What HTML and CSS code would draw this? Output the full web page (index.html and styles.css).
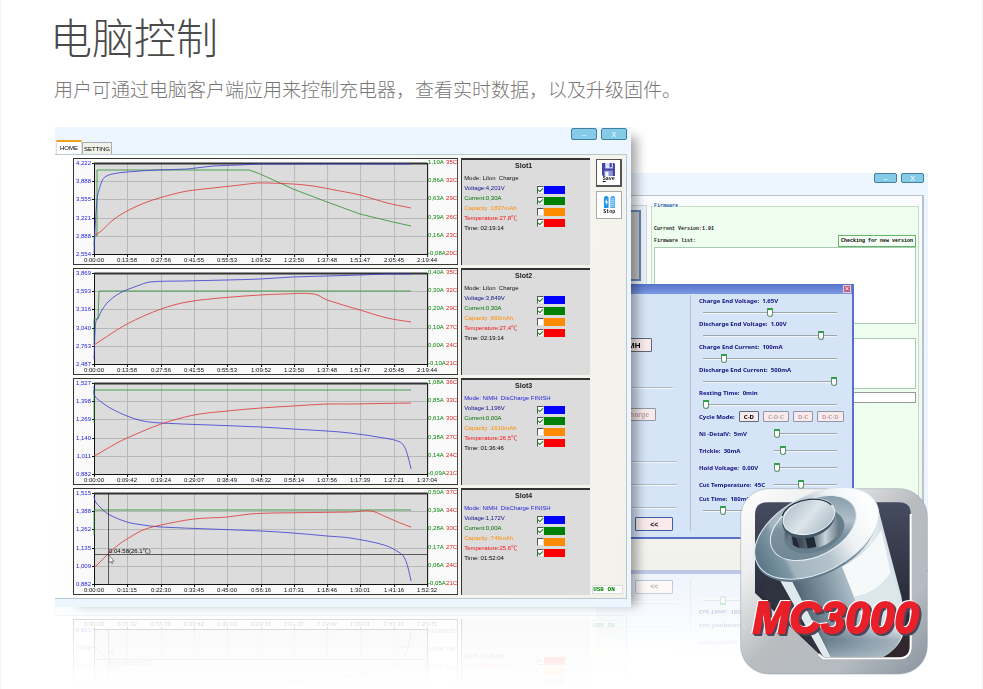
FILE: index.html
```html
<!DOCTYPE html>
<html lang="zh-CN">
<head>
<meta charset="utf-8">
<meta name="viewport" content="width=device-width, initial-scale=1">
<title>MC3000 电脑控制</title>
<link rel="stylesheet" href="styles.css">
</head>
<body>
<main class="page">
  <header class="intro">
    <h1>电脑控制</h1>
    <p>用户可通过电脑客户端应用来控制充电器，查看实时数据，以及升级固件。</p>
  </header>

  <section class="stage">
    <div class="window window--main">
      <div class="titlebar">
        <button class="winbtn" type="button" aria-label="Minimize">–</button>
        <button class="winbtn" type="button" aria-label="Close">X</button>
      </div>
      <nav class="tabs">
        <button class="tab tab--active" type="button">HOME</button>
        <button class="tab" type="button">SETTING</button>
      </nav>
      <div class="board">
        <div class="slots" id="slots"></div>
        <div class="tools">
          <button class="tool tool--focus" type="button">
            <svg viewBox="0 0 12 12" aria-hidden="true">
              <path d="M0 0h11l1 1v11H1L0 11z" fill="#4546a8"/>
              <path d="M3 0h7v5H3z" fill="#d9e4fa"/>
              <path d="M7 0h2v4H7z" fill="#4546a8"/>
              <path d="M2 7h8v5H2z" fill="#8f95d4"/>
              <path d="M3 8h3v4H3z" fill="#f4f6ff"/>
            </svg>
            <span><u>S</u>ave</span>
          </button>
          <button class="tool" type="button">
            <svg viewBox="0 0 13 14" aria-hidden="true">
              <path d="M1.500 0h3v1h1v12h-5V1h1z" fill="#2496e6"/>
              <path d="M3.500 3 1.500 7h1.500v3l2-4H3.500z" fill="#fff"/>
              <path d="M8.500 0h3v1h1v12h-5V1h1z" fill="#48a9ea"/>
              <path d="M8 3h4M8 5h4M8 7h4M8 9h4M8 11h4" stroke="#d9efff" stroke-width=".8"/>
            </svg>
            <span>Stop</span>
          </button>
          <output class="usb">USB ON</output>
        </div>
      </div>
    </div>

    <div class="window window--back">
      <div class="titlebar">
        <button class="winbtn" type="button" aria-label="Minimize">–</button>
        <button class="winbtn" type="button" aria-label="Close">X</button>
      </div>
      <div class="backbody">
        <div class="device"><div class="device__view"></div></div>
        <fieldset class="firmware">
          <legend>Firmware</legend>
          <p class="firmware__version">Current Version:1.01</p>
          <div class="firmware__row">
            <span>Firmware list:</span>
            <button type="button" class="check">Checking for new version</button>
          </div>
          <div class="well well--list"></div>
          <div class="well well--notes"></div>
          <div class="well well--progress"></div>
        </fieldset>
      </div>

      <div class="dialog">
        <div class="dialog__bar"><button type="button" aria-label="Close dialog">×</button></div>
        <div class="dialog__body">
          <div class="dialog__left">
            <button type="button" class="pink pink--type">NiMH</button>
            <hr>
            <button type="button" class="pink pink--mode" disabled>Discharge</button>
            <hr class="wide"><hr class="wide near"><hr class="wide near">
            <button type="button" class="pink pink--back">&lt;&lt;</button>
          </div>
          <form class="params">
            <label>Charge End Voltage:&nbsp; 1.65V<input type="range" value="50"></label>
            <label>Discharge End Voltage:&nbsp; 1.00V<input type="range" value="90"></label>
            <label>Charge End Current:&nbsp; 100mA<input type="range" value="14"></label>
            <label>Discharge End Current:&nbsp; 500mA<input type="range" value="100"></label>
            <label>Resting Time:&nbsp; 0min<input type="range" value="0"></label>
            <div class="cycle">
              <span>Cycle Mode:</span>
              <button type="button" class="pink">C-D</button>
              <button type="button" class="pink" disabled>C-D-C</button>
              <button type="button" class="pink" disabled>D-C</button>
              <button type="button" class="pink" disabled>D-C-D</button>
            </div>
            <label class="inline">Ni -DetalV:&nbsp; 5mV<input type="range" value="0"></label>
            <label class="inline">Trickle:&nbsp; 30mA<input type="range" value="10"></label>
            <label class="inline">Hold Voltage:&nbsp; 0.00V<input type="range" value="0"></label>
            <label class="inline">Cut Temperature:&nbsp; 45C<input type="range" value="42"></label>
            <label>Cut Time:&nbsp; 180min<input type="range" value="13"></label>
          </form>
        </div>
      </div>
    </div>

    <svg class="logo" viewBox="0 0 564 560" role="img" aria-label="MC3000">
      <defs>
        <linearGradient id="frame" x1="0" y1="0" x2="1" y2="1">
          <stop offset="0" stop-color="#ffffff"/><stop offset=".25" stop-color="#eceded"/>
          <stop offset=".5" stop-color="#b9bcbf"/><stop offset=".75" stop-color="#b4bbc1"/><stop offset="1" stop-color="#8a949e"/>
        </linearGradient>
        <linearGradient id="hole" x1="0" y1="0" x2="0" y2="1">
          <stop offset="0" stop-color="#464c60"/><stop offset=".6" stop-color="#2b2d3a"/><stop offset="1" stop-color="#30262a"/>
        </linearGradient>
        <linearGradient id="body" gradientUnits="userSpaceOnUse" x1="130" y1="350" x2="475" y2="245">
          <stop offset="0" stop-color="#394653"/><stop offset=".2" stop-color="#5d717f"/><stop offset=".4" stop-color="#8499a6"/>
          <stop offset=".62" stop-color="#b5c6d0"/><stop offset=".85" stop-color="#e6edf1"/><stop offset="1" stop-color="#d3dde3"/>
        </linearGradient>
        <linearGradient id="foot" x1="0" y1="0" x2="0" y2="1">
          <stop offset="0" stop-color="#a9bac5" stop-opacity="0"/><stop offset=".5" stop-color="#6b7f8d" stop-opacity=".5"/><stop offset="1" stop-color="#a9bac5" stop-opacity=".8"/>
        </linearGradient>
        <linearGradient id="rim" gradientUnits="userSpaceOnUse" x1="-185" y1="0" x2="185" y2="0">
          <stop offset="0" stop-color="#5f7b8b"/><stop offset=".16" stop-color="#8097a5"/><stop offset=".2" stop-color="#a3b5c0"/>
          <stop offset=".5" stop-color="#b4c3cc"/><stop offset=".72" stop-color="#eef2f4"/><stop offset="1" stop-color="#ffffff"/>
        </linearGradient>
        <linearGradient id="ring" x1="0" y1="1" x2="1" y2="0">
          <stop offset="0" stop-color="#6b8292"/><stop offset=".45" stop-color="#7c929f"/><stop offset=".6" stop-color="#b0c0ca"/><stop offset="1" stop-color="#71889a"/>
        </linearGradient>
        <linearGradient id="nub" x1="0" y1="0" x2="1" y2="0">
          <stop offset="0" stop-color="#2f3a45"/><stop offset=".12" stop-color="#6d7c88"/><stop offset=".3" stop-color="#3c4853"/>
          <stop offset=".6" stop-color="#7d8d99"/><stop offset=".75" stop-color="#c9d5dc"/><stop offset="1" stop-color="#63737f"/>
        </linearGradient>
        <linearGradient id="nubtop" x1="0" y1="0" x2="1" y2="1">
          <stop offset="0" stop-color="#a9bac5"/><stop offset=".5" stop-color="#dce5ea"/><stop offset="1" stop-color="#a1b4bf"/>
        </linearGradient>
        <clipPath id="cut"><path d="M0 0H510V476Q505 508 475 508H252L45 312L0 260Z"/></clipPath>
      </defs>
      <rect x="2" y="2" width="560" height="556" rx="84" fill="url(#frame)" stroke="#929ca5" stroke-opacity=".5" stroke-width="3"/>
      <path d="M82 43H478Q512 43 512 77V474Q512 510 476 510H250L45 315V80Q45 43 82 43Z" fill="url(#hole)"/>
      <path d="M512 78V474Q512 511 476 511H250L236 498" fill="none" stroke="#fff" stroke-width="6"/>
      <g clip-path="url(#cut)">
        <path d="M70 235L252 512H420Q482 482 494 425Q492 370 484 325L414 60Z" fill="url(#body)"/>
        <path d="M306 236Q390 190 424 125L452 255Q410 315 342 327Z" fill="#f6f9fa"/>
        <path d="M342 327Q410 315 452 255L476 320L440 380H360Z" fill="#dde6eb"/>
        <path d="M230 400H494Q486 484 420 512H275Z" fill="url(#foot)"/>
        <path d="M112 264L252 512H275L150 268Z" fill="#dfe8ed"/>
        <path d="M80 240L112 264L252 512L60 312Z" fill="#2f333f"/>
      </g>
      <ellipse cx="228" cy="145" rx="197" ry="116" transform="rotate(-27 228 145)" fill="#60798a"/>
      <g transform="translate(230 136) rotate(-27)">
        <ellipse rx="200" ry="116" fill="url(#rim)" stroke="#dfe7eb" stroke-width="3"/>
      </g>
      <ellipse cx="220" cy="120" rx="138" ry="84" transform="rotate(-27 220 120)" fill="url(#ring)" stroke="#e7eef2" stroke-width="3"/>
      <ellipse cx="222" cy="130" rx="94" ry="62" transform="rotate(-20 222 130)" fill="#667d8c"/>
      <path d="M127 90L139 151Q160 186 213 183Q277 173 299 128L283 68Z" fill="url(#nub)"/>
      <path d="M155 144L170 151L178 181L160 172ZM196 150L222 146L229 177L203 181Z" fill="#202a36"/>
      <ellipse cx="206" cy="94" rx="81" ry="54" transform="rotate(-17 206 94)" fill="#44586a"/>
      <ellipse cx="207" cy="86" rx="79" ry="51" transform="rotate(-17 207 86)" fill="url(#nubtop)" stroke="#edf3f6" stroke-width="3"/>
      <path d="M127 84Q139 45 207 34Q250 30 274 50" fill="none" stroke="#1f303d" stroke-width="4"/>
      <text class="logo__text" x="38" y="435">MC3000</text>
    </svg>
  </section>
</main>
<script src="charts.js"></script>
</body>
</html>
```
FILE: styles.css
```css
* { box-sizing: border-box; }

body {
  margin: 0;
  background: #fff;
  font-family: "Liberation Sans", "Noto Sans CJK SC", sans-serif;
  overflow-x: hidden;
}

button { font-family: inherit; padding: 0; margin: 0; }

.page {
  min-height: 100vh;
  padding: 5px 54px 0 54px;
  border: solid #f2f2f2;
  border-width: 0 1px;
}

.intro h1,
.intro p {
  margin: 0;
  font-family: "Noto Sans CJK SC", sans-serif;
}
.intro h1 { font-size: 42px; line-height: 62px; font-weight: 300; color: #4a4a4a; margin-left: -5px; }
.intro p { margin-left: -1px; font-size: 19px; line-height: 44px; font-weight: 300; color: #777; }

.stage { position: relative; margin-top: 16px; }

/* Windows */
.window { background: #edf6fe; }
.window--main {
  position: relative;
  z-index: 2;
  width: 66%;
  padding-bottom: 8px;
  -webkit-box-reflect: below 0 linear-gradient(transparent 83%, rgba(0, 0, 0, .2));
}
.stage::before {
  content: "";
  position: absolute;
  z-index: 1;
  inset: 8px 34% 4px 16px;
  box-shadow: 6px 2px 10px rgba(0, 0, 0, .35);
}
.window--back {
  position: absolute;
  z-index: 0;
  top: 46px;
  right: 0;
  width: 38%;
  border-bottom: 2px solid #c0c8e4;
  padding-right: 4px;
}

.titlebar { display: flex; justify-content: flex-end; gap: 4px; height: 14px; padding: 1px 4px 0 0; }
.winbtn {
  width: 26px;
  height: 12px;
  border: 1px solid #3f7f9f;
  border-radius: 2px;
  background: #85cbe8;
  color: #fff;
  font-size: 7px;
  line-height: 9px;
}
.window--back .titlebar { height: 22px; padding: 0; }
.window--back .winbtn { width: 23px; height: 10px; line-height: 7px; }

.tabs { display: flex; align-items: flex-end; height: 13px; padding-left: 1px; }
.tab {
  height: 12px;
  padding: 0 1px;
  border: 1px solid #a5afb0;
  border-bottom: 0;
  background: #f2f1e8;
  font-size: 6px;
  line-height: 10px;
  color: #000;
}
.tab--active { height: 14px; padding: 0 3px; border-color: #ddd; border-top: 2px solid #f0a020; background: #fff; }

.board {
  display: grid;
  grid-template-columns: minmax(0, 1fr) 32px;
  gap: 4px;
  margin-right: 4px;
  padding: 3px 0 3px 18px;
  border: 1px solid #b5c8d4;
  border-left: 0;
  background: linear-gradient(100deg, #fff, #f2f2ea);
}

.slots { display: grid; gap: 3px; }
.slot { display: grid; grid-template-columns: 385fr 129fr; gap: 3px; }
.slot svg { display: block; width: 100%; background: #fafafa; }
.slot text { font-size: 6px; }
.frame { fill: none; stroke: #333; }
.plot { fill: #dcdcdc; }
.grid { stroke: #b8b8b8; fill: none; }
.axis { stroke: #111; fill: none; }
.axis--top { stroke: #333; stroke-width: 2; }
.line { fill: none; stroke-width: .8; stroke-linejoin: round; }
.line--blue { stroke: #3a3ad0; }
.line--green { stroke: #2b902b; }
.line--red { stroke: #dc3434; }
.volt { fill: #2222e0; text-anchor: end; }
.amp { fill: #008000; }
.temp { fill: #e01818; text-anchor: end; }
.time { fill: #111; text-anchor: middle; }
.cross { stroke: #222; stroke-width: .7; fill: none; }

.info {
  padding: 1px 2px;
  border: solid #333;
  border-width: 2px 0 0 1px;
  background: #dcdcdc;
  font-size: 6px;
  line-height: 10px;
  white-space: nowrap;
}
.info h2 { margin: 0 5px 2px 0; font-size: 7px; line-height: 10px; text-align: center; font-weight: 600; color: #222; }
.info p { margin: 0; }
.info__mode { color: #111; }
.info__mode--done { color: #2222dd; }
.info__grid { display: grid; grid-template-columns: 73px 28px; }
.info__volt { color: #10108c; }
.info__amp { color: #007000; }
.info__cap { color: #ff8c00; }
.info__temp { color: #f01010; }
.swatches { display: grid; gap: 3px; align-content: start; padding-top: 3px; }
.swatch { display: block; height: 8px; }
.swatch--blue { background: #00f; }
.swatch--green { background: #008000; }
.swatch--orange { background: #ff8c00; }
.swatch--red { background: #f00; }
.swatch input {
  display: block;
  appearance: none;
  width: 7px;
  height: 8px;
  margin: 0;
  border: 1px solid #555;
  border-right-color: #ddd;
  border-bottom-color: #ddd;
  background: #fff;
}
.swatch input:checked::after {
  content: "";
  display: block;
  width: 4px;
  height: 2px;
  margin-top: 1px;
  border: solid #118811;
  border-width: 0 0 1px 1px;
  transform: rotate(-45deg);
}

.tools { display: flex; flex-direction: column; align-items: flex-start; gap: 4px; padding-top: 1px; padding-left: 2px; }
.tool {
  display: flex;
  flex-direction: column;
  align-items: center;
  justify-content: center;
  width: 26px;
  height: 28px;
  border: 1px solid #aaa;
  background: #fff;
  font: bold 5px/6px "Liberation Mono", monospace;
  color: #111;
}
.tool--focus { border: 2px solid #555; border-width: 1px 2px 2px 1px; }
.tool svg { width: 13px; height: 13px; }
.usb {
  width: 31px;
  margin: auto 0 1px -4px;
  border: 1px solid #ddd;
  background: #fff;
  font: bold 6px/7px "Liberation Mono", monospace;
  color: #008000;
}

/* Firmware window */
.backbody {
  display: flex;
  gap: 4px;
  height: 375px;
  padding: 7px 3px 0 0;
  border: 1px solid #b9c3cf;
  border-width: 1px 2px 0 0;
  background: linear-gradient(#fafcff, #f2f2ec);
}
.device { flex: 1; height: 81px; margin-top: 2px; padding: 4px 5px; border: 1px solid #cdd8dc; background: #edf4f9; }
.device__view { height: 71px; border: 2px solid #6686b8; background: #c6c6c6; }
.firmware {
  width: 268px;
  height: 322px;
  margin: 0;
  padding: 0 2px;
  border: 1px solid #c4dcc0;
  background: #efffef;
  font: 600 5px/8px "Liberation Mono", monospace;
  color: #222;
}
.firmware legend { height: 6px; padding: 0 1px; line-height: 6px; color: #1859a5; margin-left: -1px; }
.firmware p { margin: 16px 0 2px; }
.firmware__row { display: flex; justify-content: space-between; align-items: center; }
.check { height: 12px; padding: 0 2px; border: 1px solid #62b562; background: #f5fff5; font: inherit; }
.well { border: 1px solid #a6ccb6; background: #fff; }
.well--list { height: 77px; }
.well--notes { height: 51px; margin-top: 14px; }
.well--progress { height: 11px; margin-top: 3px; border-color: #999; }

.dialog {
  position: absolute;
  top: 111px;
  left: 0;
  right: 74px;
  border: 1px solid #5a70c8;
  border-width: 0 2px 2px 0;
  background: #d6e4f7;
  -webkit-box-reflect: below 33px linear-gradient(transparent 68%, rgba(0, 0, 0, .4));
}
.dialog__bar { display: flex; justify-content: flex-end; height: 10px; padding: 1px; background: linear-gradient(#5672c6, #7c9ae6); }
.dialog__bar button { width: 8px; height: 8px; border: 1px solid #e9c8d0; background: #c06080; color: #fff; font-size: 7px; line-height: 6px; }
.dialog__body { display: flex; padding: 1px 0 6px; }
.dialog__left { flex: 1; padding: 43px 13px 0 0; border-right: 1px solid #b4bfcf; }
.dialog__left hr { margin: 35px 4px 19px 0; border: 0; border-top: 1px solid #aebbc8; border-bottom: 1px solid #f4f6f8; }
.dialog__left .wide { margin: 40px 0 0; }
.dialog__left .near { margin-top: 21px; }
.pink {
  display: block;
  height: 11px;
  padding: 0 2px;
  border: 1px solid #5c6878;
  border-radius: 1px;
  background: #fbeaec;
  font-size: 6px;
  font-weight: 700;
  color: #000;
}
.pink:disabled { color: #b8a4a8; border-color: #8c98a8; }
.pink--type { width: 56px; height: 14px; padding-left: 14px; font-size: 8px; }
.pink--mode { width: 60px; height: 13px; padding-left: 14px; font-size: 7px; }
.pink--back { width: 38px; height: 14px; margin: 8px 0 0 39px; border: 1px solid #3d5fa8; font-size: 7px; }

.params { width: 161px; padding-left: 8px; font: 700 6px/12px "Noto Sans", sans-serif; color: #10107c; }
.params label { display: flex; flex-direction: column; height: 23px; white-space: nowrap; }
.params input { width: 134px; height: 11px; margin: 0 0 0 4px; appearance: none; background: none; }
.params input::-webkit-slider-runnable-track { height: 2px; border-top: 1px solid #9ba6ae; border-bottom: 1px solid #f4f4f4; }
.params input::-webkit-slider-thumb {
  appearance: none;
  width: 6px;
  height: 9px;
  margin-top: -5px;
  border: 1px solid #5d8f68;
  border-top: 2px solid #2fa044;
  border-radius: 0 0 3px 3px;
  background: #fff;
}
.params .inline { flex-direction: row; justify-content: space-between; align-items: center; height: 17px; padding-right: 15px; }
.params .inline input { width: 63px; }
.cycle { display: flex; align-items: center; gap: 4px; height: 13px; margin-bottom: 2px; white-space: nowrap; }
.cycle .pink { padding: 0 4px; }

.logo { position: absolute; z-index: 3; right: 0; top: 361px; width: 188px; }
.logo__text {
  font: italic 700 132px "Liberation Sans", sans-serif;
  fill: #e8202a;
  stroke: #e8202a;
  stroke-width: 6;
  filter: drop-shadow(-3px -3px 0 #fff) drop-shadow(6px 6px 0 #4b4658);
}
```
FILE: charts.js
```js
const slots = [
  {
    name: "Slot1", mode: "Mode: LiIon  Charge", done: false,
    text: ["Voltage:4,201V", "Current:0,30A", "Capacity :1837mAh", "Temperature:27,8℃", "Time: 02:19:14"],
    volt: ["4,222", "3,888", "3,555", "3,221", "2,888", "2,554"],
    amp: ["1,10A", "0,86A", "0,63A", "0,39A", "0,16A", "-0,08A"],
    temp: ["35C", "32C", "29C", "26C", "23C", "20C"],
    time: ["0:00:00", "0:13:58", "0:27:56", "0:41:55", "0:55:53", "1:09:52", "1:23:50", "1:37:48", "1:51:47", "2:05:45", "2:19:44"],
    blue: "0,90 1,66 3,37 5,27 8,18 11,14 18,11 33,9 63,7 93,6 119,3 146,2 165,1 317,1",
    green: "0,83 0,73 3,73 3,7 155,7 158,8 166,11 186,20 199,26 233,39 266,51 299,59 317,63",
    red: "0,72 6,69 19,57 33,48 53,39 76,32 93,28 119,25 146,22 163,20 173,20 199,21 219,23 246,28 266,32 293,40 317,45"
  },
  {
    name: "Slot2", mode: "Mode: LiIon  Charge", done: false,
    text: ["Voltage:3,849V", "Current:0,30A", "Capacity :690mAh", "Temperature:27,4℃", "Time: 02:19:14"],
    volt: ["3,869", "3,593", "3,316", "3,040", "2,763", "2,487"],
    amp: ["0,40A", "0,30A", "0,20A", "0,10A", "0,00A", "-0,10A"],
    temp: ["35C", "32C", "29C", "27C", "24C", "21C"],
    time: ["0:00:00", "0:13:58", "0:27:56", "0:41:55", "0:55:53", "1:09:52", "1:23:50", "1:37:48", "1:51:47", "2:05:45", "2:19:44"],
    blue: "0,86 1,58 2,48 4,45 8,37 14,29 26,20 43,13 56,9 89,8 133,7 166,6 199,4 233,3 266,2 293,1 317,1",
    green: "0,72 0,46 4,46 5,18 317,18",
    red: "0,72 6,68 33,51 67,36 93,29 126,25 166,22 189,21 220,21 233,27 266,37 293,45 317,49"
  },
  {
    name: "Slot3", mode: "Mode: NiMH  DisCharge FINISH", done: true,
    text: ["Voltage:1,196V", "Current:0,00A", "Capacity :1610mAh", "Temperature:26,5℃", "Time: 01:36:46"],
    volt: ["1,527", "1,398", "1,269", "1,140", "1,011", "0,882"],
    amp: ["1,08A", "0,85A", "0,61A", "0,38A", "0,14A", "-0,09A"],
    temp: ["36C", "33C", "30C", "27C", "24C", "21C"],
    time: ["0:00:00", "0:09:42", "0:19:24", "0:29:07", "0:38:49", "0:48:32", "0:58:14", "1:07:56", "1:17:39", "1:27:21", "1:37:04"],
    blue: "0,3 0,11 6,18 18,26 33,33 49,38 67,40 116,42 167,44 199,46 233,48 256,50 290,55 306,59 311,65 314,74 317,86",
    green: "0,40 0,7 317,7",
    red: "0,73 4,71 21,61 33,55 67,41 100,32 133,28 167,25 199,23 233,21 256,21 317,20"
  },
  {
    name: "Slot4", mode: "Mode: NiMH  DisCharge FINISH", done: true,
    text: ["Voltage:1,172V", "Current:0,00A", "Capacity :746mAh", "Temperature:25,6℃", "Time: 01:52:04"],
    volt: ["1,515", "1,388", "1,262", "1,135", "1,009", "0,882"],
    amp: ["0,50A", "0,39A", "0,28A", "0,17A", "0,06A", "-0,05A"],
    temp: ["37C", "34C", "30C", "27C", "24C", "21C"],
    time: ["0:00:00", "0:11:15", "0:22:30", "0:33:45", "0:45:00", "0:56:16", "1:07:31", "1:18:46", "1:30:01", "1:41:16", "1:52:32"],
    blue: "0,3 1,8 6,14 14,21 33,29 49,32 67,34 116,36 167,38 199,40 233,43 256,45 290,52 306,60 311,66 314,75 317,88",
    green: "0,42 0,17 317,17",
    red: "0,74 3,72 14,61 24,52 33,46 49,37 67,32 100,26 133,24 156,21 179,20 256,19 277,18 290,23 306,30 317,34",
    cursor: true
  }
];

const W = 333, H = 91;

// Smooth curve through the samples (Catmull-Rom converted to cubic segments).
function smooth(points) {
  const p = points.split(" ").map(q => q.split(",").map(Number));
  let d = `M${p[0]}`;
  for (let i = 0; i < p.length - 1; i++) {
    const a = p[i - 1] || p[i], b = p[i], c = p[i + 1], e = p[i + 2] || c;
    const k = (c[0] - b[0]) / 3;
    const sb = c[0] - a[0] ? (c[1] - a[1]) / (c[0] - a[0]) : 0;
    const sc = e[0] - b[0] ? (e[1] - b[1]) / (e[0] - b[0]) : 0;
    d += `C${b[0] + k} ${b[1] + sb * k} ${c[0] - k} ${c[1] - sc * k} ${c}`;
  }
  return d;
}

function chart(s) {
  const cols = s.time.map((t, i) => {
    const x = Math.round(i * W / 10);
    return `<path class="grid" d="M${x}.5 0V${H}"/><path class="axis" d="M${x}.5 ${H}v3"/><text class="time" x="${x}" y="99">${t}</text>`;
  }).join("");
  const rows = s.volt.map((v, i) => {
    const y = Math.round(i * H / 5);
    return `<path class="grid" d="M0 ${y}.5H${W}"/><path class="axis" d="M-2 ${y}.5h2"/>` +
      `<text class="volt" x="-3" y="${y + 2}">${v}</text>` +
      `<text class="amp" x="${W + 1}" y="${y + 1}">${s.amp[i]}</text>` +
      `<text class="temp" x="363" y="${y + 1}">${s.temp[i]}</text>`;
  }).join("");
  const cross = s.cursor
    ? `<path class="cross" d="M14.500 0V${H}M0 61.500H${W}"/><text x="15" y="60">0:04:58(26.1℃)</text>` +
      `<path d="M15 62v8l2-2 1 3 1-1-1-2h2z" fill="#fff" stroke="#333" stroke-width=".5"/>`
    : "";
  return `<svg viewBox="0 0 385 107" role="img" aria-label="${s.name} chart">
    <rect class="frame" x=".5" y=".5" width="384" height="106"/>
    <g transform="translate(21 5)">
      <rect class="plot" width="${W}" height="${H}"/>${rows}${cols}
      <path class="axis" d="M.5 0V${H}.5H${W}.5V0"/><path class="axis axis--top" d="M0 .5H${W}"/>
      <polyline class="line line--green" points="${s.green}"/>
      <path class="line line--blue" d="${smooth(s.blue)}"/>
      <path class="line line--red" d="${smooth(s.red)}"/>${cross}
    </g></svg>`;
}

function info(s) {
  const kinds = ["volt", "amp", "cap", "temp", "time"];
  const boxes = [["blue", "Voltage"], ["green", "Current"], ["orange", "Capacity"], ["red", "Temperature"]];
  return `<div class="info"><h2>${s.name}</h2>
    <p class="info__mode${s.done ? " info__mode--done" : ""}">${s.mode.replace("  ", "&nbsp; ")}</p>
    <div class="info__grid"><div>${s.text.map((t, i) => `<p class="info__${kinds[i]}">${t}</p>`).join("")}</div>
    <div class="swatches">${boxes.map(([c, n]) =>
      `<label class="swatch swatch--${c}"><input type="checkbox" aria-label="${n}"${c === "orange" ? "" : " checked"}></label>`).join("")}</div></div></div>`;
}

document.getElementById("slots").innerHTML =
  slots.map(s => `<article class="slot">${chart(s)}${info(s)}</article>`).join("");
```
